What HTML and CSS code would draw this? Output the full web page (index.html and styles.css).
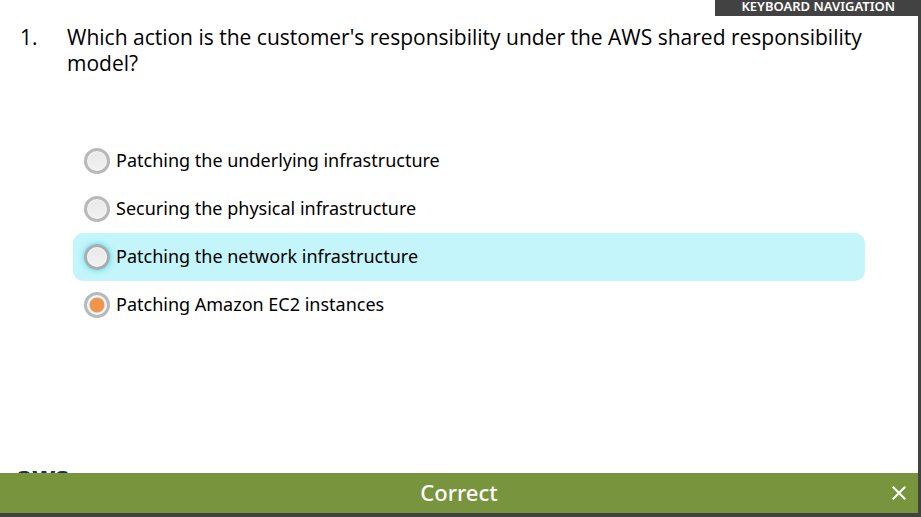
FILE: index.html
```html
<!DOCTYPE html>
<html lang="en">
<head>
<meta charset="utf-8">
<meta name="viewport" content="width=device-width, initial-scale=1">
<title>Knowledge check</title>
<link rel="stylesheet" href="styles.css">
</head>
<body>
<div class="player">
  <header class="topbar">
    <button class="keyboard-nav" type="button">KEYBOARD NAVIGATION</button>
  </header>
  <main class="quiz">
    <fieldset class="question">
      <legend class="prompt">
        <span class="number">1.</span>
        <span class="prompt-text">Which action is the customer's responsibility under the AWS shared responsibility model?</span>
      </legend>
      <div class="choices">
        <label class="choice"><input type="radio" name="answer"><span class="choice-text">Patching the underlying infrastructure</span></label>
        <label class="choice"><input type="radio" name="answer"><span class="choice-text">Securing the physical infrastructure</span></label>
        <label class="choice choice-active"><input type="radio" name="answer"><span class="choice-text">Patching the network infrastructure</span></label>
        <label class="choice"><input type="radio" name="answer" checked><span class="choice-text">Patching Amazon EC2 instances</span></label>
      </div>
    </fieldset>
  </main>
  <footer class="brand"><span class="logo">aws</span></footer>
  <div class="feedback" role="status">
    <span class="feedback-text">Correct</span>
    <button class="close" type="button" aria-label="Close">
      <svg viewBox="0 0 14 14" width="14" height="14" aria-hidden="true"><path d="M.7 .7 L13.3 13.3 M13.3 .7 L.7 13.3" fill="none" stroke="#fff" stroke-width="2"/></svg>
    </button>
  </div>
</div>
</body>
</html>
```
FILE: styles.css
```css
* {
  box-sizing: border-box;
}

body {
  margin: 0;
  background: #424242;
  color: #000;
  font-family: "Noto Sans", "Open Sans", sans-serif;
}

.player {
  position: relative;
  display: flex;
  flex-direction: column;
  min-height: 100vh;
  border-right: 3px solid #424242;
  border-bottom: 4px solid #424242;
  background: #fff;
  overflow: hidden;
}

.topbar {
  display: flex;
  justify-content: flex-end;
  height: 16px;
  margin-right: -3px;
}

.keyboard-nav {
  display: flex;
  align-items: flex-end;
  height: 16px;
  padding: 0 26px;
  border: 0;
  background: #424242;
  color: #fff;
  font: 600 13px/20px "Noto Sans", sans-serif;
}

.quiz {
  flex: 1;
  padding: 8px 53px 0 20px;
}

.question {
  min-width: 0;
  margin: 0;
  padding: 0;
  border: 0;
}

.prompt {
  display: flex;
  width: 100%;
  padding: 0;
  font-family: "Open Sans", sans-serif;
  font-size: 21px;
  line-height: 26px;
}

.number {
  flex: 0 0 47px;
}

.choices {
  margin: 61px 0 0 53px;
}

.choice {
  display: flex;
  align-items: center;
  gap: 6px;
  height: 48px;
  padding: 0 11px;
  border-radius: 10px;
  font-size: 18px;
  line-height: 24px;
}

.choice-text {
  padding-bottom: 2px;
}

.choice-active {
  background: #c4f5fb;
}

.choice input {
  appearance: none;
  flex: none;
  width: 26px;
  height: 26px;
  margin: 0;
  border: 3px solid #b9b9b9;
  border-radius: 50%;
  background: linear-gradient(#e8e8e8, #f2f2f2);
  box-shadow: inset 0 0 0 1px #f8f8f8;
}

.choice-active input {
  border-color: #a5afb1;
  box-shadow: inset 0 0 0 1px #f8f8f8, 0 0 6px #52d3e8;
}

.choice input:checked {
  background: radial-gradient(circle, #f59345 0 6px, #c9a58c 7px, #f2f2f2 8px);
}

.brand {
  height: 55px;
  padding-left: 16px;
}

.logo {
  display: block;
  color: #252f3e;
  font-size: 27px;
  font-weight: 700;
  line-height: 36px;
}

/* Result banner covers the foot of the slide. */
.feedback {
  position: absolute;
  right: 0;
  bottom: 0;
  left: 0;
  display: flex;
  align-items: center;
  justify-content: center;
  height: 40px;
  background: #78953d;
  color: #fff;
}

.feedback-text {
  padding-bottom: 2px;
  font-size: 22px;
  font-weight: 500;
  line-height: 30px;
}

.close {
  position: absolute;
  right: 12px;
  display: flex;
  padding: 0;
  border: 0;
  background: none;
}
```
